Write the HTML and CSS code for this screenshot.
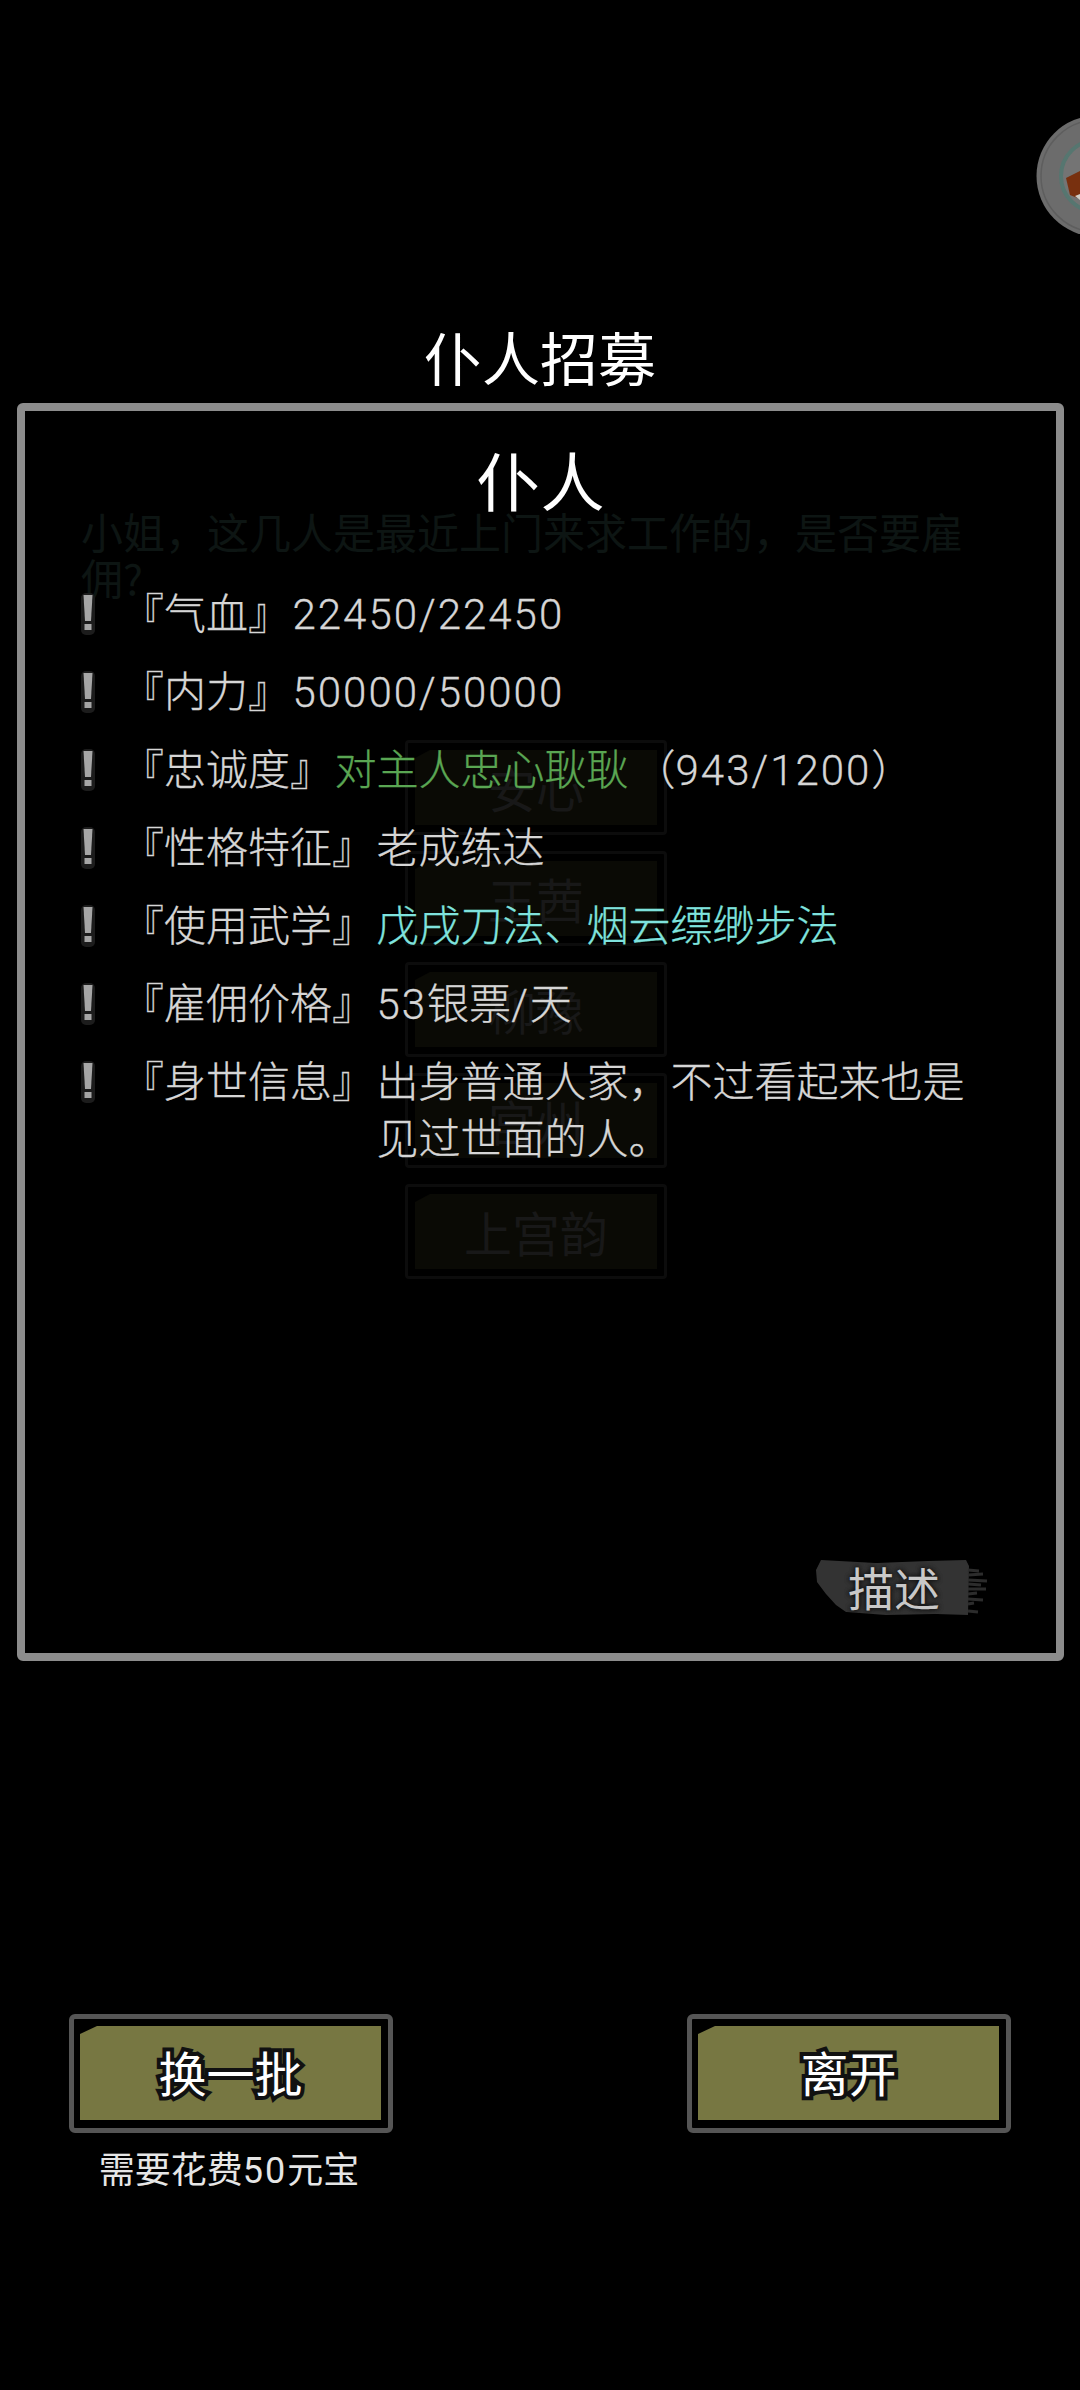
FILE: index.html
```html
<!DOCTYPE html>
<html lang="zh-CN">
<head>
	<meta charset="UTF-8">
	<title>仆人招募</title>
	<link rel="stylesheet" href="styles.css">
</head>
<body>
	<div class="screen">
		<!-- dimmed page behind the dialog -->
		<div class="backdrop">
			<p class="ghost-text">小姐，这几人是最近上门来求工作的，是否要雇佣?</p>
			<ul class="ghost-list">
				<li class="ghost-btn"><span>安心</span></li>
				<li class="ghost-btn"><span>王茜</span></li>
				<li class="ghost-btn"><span>柳豫</span></li>
				<li class="ghost-btn"><span>宫州</span></li>
				<li class="ghost-btn"><span>上宫韵</span></li>
			</ul>
		</div>

		<svg class="float-ball" viewBox="0 0 44 122">
			<circle cx="61" cy="61" r="60.5" fill="#6c6c6c"/>
			<circle cx="61" cy="61" r="56" fill="none" stroke="#5e5e5e" stroke-width="1.5"/>
			<circle cx="61" cy="61" r="36" fill="#747474" stroke="#567670" stroke-width="4"/>
			<polygon points="30,63 44,56 44,84 34,80" fill="#78300f"/>
			<polygon points="39,81 44,79 44,85" fill="#cfcfc8"/>
		</svg>

		<h1 class="title">仆人招募</h1>

		<section class="panel">
			<h2 class="panel-title">仆人</h2>
			<ul class="info-list">
				<li class="info-row">
					<svg class="bang" viewBox="0 0 16 44"><rect x="1" y="0" width="14" height="42" rx="5" fill="#1c1c1c"/><polygon points="3.5,2 12.5,2 11,28 5,28" fill="#a6a6a6"/><rect x="4.5" y="31" width="7" height="6" fill="#a6a6a6"/></svg>
					<span class="label">『气血』</span>
					<span class="value"><span class="num">22450/22450</span></span>
				</li>
				<li class="info-row">
					<svg class="bang" viewBox="0 0 16 44"><rect x="1" y="0" width="14" height="42" rx="5" fill="#1c1c1c"/><polygon points="3.5,2 12.5,2 11,28 5,28" fill="#a6a6a6"/><rect x="4.5" y="31" width="7" height="6" fill="#a6a6a6"/></svg>
					<span class="label">『内力』</span>
					<span class="value"><span class="num">50000/50000</span></span>
				</li>
				<li class="info-row">
					<svg class="bang" viewBox="0 0 16 44"><rect x="1" y="0" width="14" height="42" rx="5" fill="#1c1c1c"/><polygon points="3.5,2 12.5,2 11,28 5,28" fill="#a6a6a6"/><rect x="4.5" y="31" width="7" height="6" fill="#a6a6a6"/></svg>
					<span class="label">『忠诚度』</span>
					<span class="value"><span class="green">对主人忠心耿耿</span>（<span class="num">943/1200</span>）</span>
				</li>
				<li class="info-row">
					<svg class="bang" viewBox="0 0 16 44"><rect x="1" y="0" width="14" height="42" rx="5" fill="#1c1c1c"/><polygon points="3.5,2 12.5,2 11,28 5,28" fill="#a6a6a6"/><rect x="4.5" y="31" width="7" height="6" fill="#a6a6a6"/></svg>
					<span class="label">『性格特征』</span>
					<span class="value">老成练达</span>
				</li>
				<li class="info-row">
					<svg class="bang" viewBox="0 0 16 44"><rect x="1" y="0" width="14" height="42" rx="5" fill="#1c1c1c"/><polygon points="3.5,2 12.5,2 11,28 5,28" fill="#a6a6a6"/><rect x="4.5" y="31" width="7" height="6" fill="#a6a6a6"/></svg>
					<span class="label">『使用武学』</span>
					<span class="value cyan">戊戌刀法、烟云缥缈步法</span>
				</li>
				<li class="info-row">
					<svg class="bang" viewBox="0 0 16 44"><rect x="1" y="0" width="14" height="42" rx="5" fill="#1c1c1c"/><polygon points="3.5,2 12.5,2 11,28 5,28" fill="#a6a6a6"/><rect x="4.5" y="31" width="7" height="6" fill="#a6a6a6"/></svg>
					<span class="label">『雇佣价格』</span>
					<span class="value"><span class="num">53</span>银票<span class="num">/</span>天</span>
				</li>
				<li class="info-row">
					<svg class="bang" viewBox="0 0 16 44"><rect x="1" y="0" width="14" height="42" rx="5" fill="#1c1c1c"/><polygon points="3.5,2 12.5,2 11,28 5,28" fill="#a6a6a6"/><rect x="4.5" y="31" width="7" height="6" fill="#a6a6a6"/></svg>
					<span class="label">『身世信息』</span>
					<span class="value">出身普通人家，不过看起来也是见过世面的人。</span>
				</li>
			</ul>
			<div class="desc-btn">
				<svg class="brush" viewBox="0 0 172 60">
					<path d="M5 2 L60 5 L112 3 L150 2 L153 8 L152 57 L120 56 L70 57 L30 54 L20 47 L10 36 L1 24 L0 12 Z" fill="#333333"/>
					<path d="M152 12 L163 13 M152 17 L167 16 M152 22 L171 23 M152 26 L165 27 M152 31 L170 31 M152 36 L161 35 M152 41 L167 42 M152 46 L158 45 M152 53 L162 54" stroke="#2c2c2c" stroke-width="3"/>
				</svg>
				<span class="desc-text">描述</span>
			</div>
		</section>

		<div class="actions">
			<div class="action">
				<div class="btn"><div class="btn-face">换一批</div></div>
				<p class="cost">需要花费<span class="num">50</span>元宝</p>
			</div>
			<div class="action">
				<div class="btn"><div class="btn-face">离开</div></div>
			</div>
		</div>
	</div>
</body>
</html>
```

FILE: styles.css
```css
*{
	margin: 0;
	padding: 0;
	box-sizing: border-box;
}
body{
	background-color: #000;
	font-family: "Noto Sans CJK SC", "Noto Sans", sans-serif;
	overflow: hidden;
}
ul{
	list-style: none;
}
.screen{
	width: 1080px;
	height: 2390px;
	padding-top: 321px;
	position: relative;
	overflow: hidden;
}

/* page behind the dialog */
.backdrop{
	position: absolute;
	top: 0;
	left: 0;
	width: 100%;
	padding: 508px 0 0 81px;
}
.ghost-text{
	width: 890px;
	font-size: 42px;
	line-height: 46px;
	color: #0d1513;
}
.ghost-list{
	display: flex;
	flex-direction: column;
	gap: 16px;
	margin: 140px 0 0 324px;
}
.ghost-btn{
	width: 262px;
	height: 95px;
	padding: 7px 7px;
	border: 3px solid #0c0c0c;
	border-radius: 4px;
}
.ghost-btn span{
	display: block;
	height: 100%;
	background-color: #0a0a05;
	clip-path: polygon(15px 0, 100% 0, 100% 100%, 0 100%, 0 8px);
	font-size: 48px;
	line-height: 75px;
	text-align: center;
	color: #181818;
}

.float-ball{
	position: absolute;
	top: 115px;
	right: 0;
	width: 44px;
	height: 122px;
}

.title{
	height: 70px;
	font-size: 58px;
	font-weight: 400;
	line-height: 70px;
	text-align: center;
	color: #fff;
	position: relative;
}

/* dialog */
.panel{
	display: flex;
	flex-direction: column;
	width: 1047px;
	height: 1258px;
	margin: 12px 0 0 17px;
	padding-top: 29px;
	border: 8px solid #8c8c8c;
	border-radius: 6px;
	position: relative;
}
.panel-title{
	font-size: 64px;
	font-weight: 400;
	line-height: 76px;
	text-align: center;
	color: #fff;
}
.info-list{
	display: flex;
	flex-direction: column;
	gap: 21px;
	margin-top: 66px;
	padding: 0 85px 0 55px;
}
.info-row{
	display: flex;
	align-items: flex-start;
	font-size: 42px;
	font-weight: 300;
	line-height: 57px;
	color: #d6d6d6;
	-webkit-text-stroke: 0.3px currentColor;
}
.bang{
	flex: none;
	width: 16px;
	height: 44px;
	margin: 11px 26px 0 0;
}
.label{
	flex: none;
	margin-right: 2.5px;
}
.value{
	min-width: 0;
}
.num{
	font-family: Roboto, sans-serif;
	line-height: 1;
	letter-spacing: 2px;
}
.green{
	color: #5aa653;
	margin-right: 5px;
}
.cyan{
	color: #7fe3de;
}
.desc-btn{
	align-self: flex-end;
	width: 172px;
	height: 60px;
	margin: auto 68px 35px 0;
	position: relative;
}
.brush{
	position: absolute;
	top: 0;
	left: 0;
	width: 172px;
	height: 60px;
	filter: blur(0.7px);
}
.desc-text{
	display: block;
	padding-left: 32px;
	font-size: 46px;
	line-height: 56px;
	color: #c8c8c8;
	text-shadow: 0 0 5px #111, 0 0 5px #111;
	position: relative;
}

/* bottom buttons */
.actions{
	display: flex;
	justify-content: space-between;
	margin-top: 353px;
	padding: 0 69px;
}
.action{
	width: 324px;
}
.btn{
	height: 119px;
	padding: 7px 7px 8px 6px;
	border: 5px solid #555;
	border-radius: 6px;
}
.btn-face{
	height: 100%;
	background-color: #777742;
	clip-path: polygon(17px 0, 100% 0, 100% 100%, 0 100%, 0 8px);
	font-size: 48px;
	font-weight: 400;
	line-height: 90px;
	text-align: center;
	color: #fff;
	-webkit-text-stroke: 8px #111;
	paint-order: stroke fill;
}
.cost{
	margin-top: 12px;
	padding-right: 4px;
	font-size: 36px;
	line-height: 44px;
	text-align: center;
	color: #e6e6e6;
}
```
